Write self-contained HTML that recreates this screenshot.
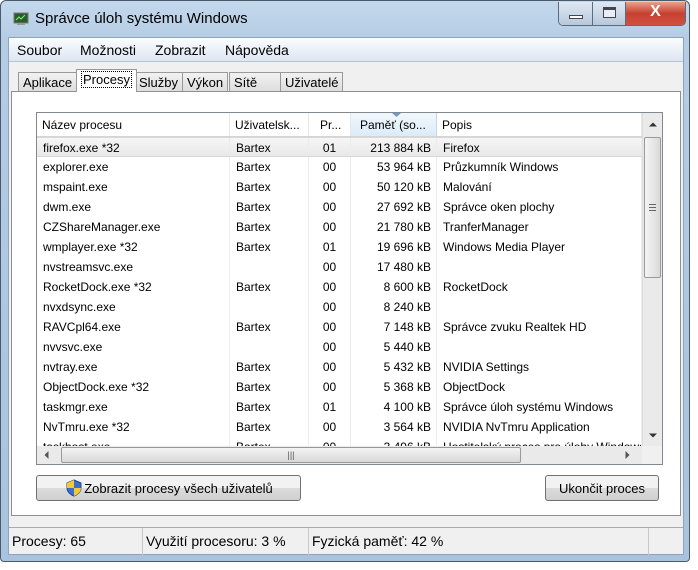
<!DOCTYPE html>
<html><head><meta charset="utf-8"><style>
*{box-sizing:border-box;margin:0;padding:0}
body{width:698px;height:570px;background:#fff;font-family:"Liberation Sans",sans-serif;font-size:12px;color:#000;position:relative;overflow:hidden}
.frame{position:absolute;left:0;top:0;width:690px;height:562px;border:1px solid #4a5a6a;border-radius:6px 6px 4px 4px;background:linear-gradient(#c4d8ec,#b4cce4 40px,#a9c3de);}
.title{position:absolute;left:34px;top:9px;font-size:15px;color:#000}
.client{position:absolute;left:7px;top:36px;width:676px;height:518px;background:#f0f0f0;border:1px solid #8ea4bc}
.menu{position:absolute;left:0;top:0;width:100%;height:24px;background:linear-gradient(#fbfcfe,#dde6f1);border-bottom:1px solid #b6c4d4;font-size:14px}
.menu span{position:absolute;top:4px}
.tab{position:absolute;top:34px;height:20px;border:1px solid #999;border-bottom:none;background:linear-gradient(#f2f2f2,#dcdcdc);font-size:13px;padding:2px 4px 0}
.panel{position:absolute;left:2px;top:53px;width:670px;height:425px;background:#fff;border:1px solid #8e8f8f}
.list{position:absolute;left:24px;top:20px;width:627px;height:353px;border:1px solid #828790;background:#fff;overflow:hidden}
.hdr{position:absolute;left:0;top:0;width:605px;height:24px;background:#fff;border-bottom:1px solid #d5d5d5;font-size:12px}
.hdr div,.row div{position:absolute;top:0;height:100%;white-space:nowrap;overflow:hidden;padding-top:5px}
.hdr div{border-right:1px solid #e3e8ee;padding-left:5px}
.rows{position:absolute;left:0;top:0;width:605px;height:333px;overflow:hidden}
.row{position:absolute;left:0;width:605px;height:20px;font-size:12px}
.row div{padding-top:3px;border-right:1px solid #ececec}
.c1{left:0;width:193px;padding-left:6px}
.c2{left:193px;width:79px;padding-left:6px}
.c3{left:272px;width:42px;text-align:center}
.c4{left:314px;width:86px;text-align:right;padding-right:5px}
.c5{left:400px;width:205px;padding-left:6px}
.vs{position:absolute;left:605px;top:0;width:20px;height:333px;background:#eaeaea;border-left:1px solid #ddd;z-index:3}
.hs{position:absolute;left:0;top:333px;width:625px;height:18px;background:#eaeaea;z-index:3}
.btn{position:absolute;height:26px;border:1px solid #707070;border-radius:3px;background:linear-gradient(#f2f2f2 50%,#dcdcdc 50%,#cfcfcf);font-size:13px;text-align:center;padding-top:5px}
.status{position:absolute;left:0;top:489px;width:674px;height:27px;border-top:1px solid #aaa;font-size:14px;background:#f0f0f0}
.status div{position:absolute;top:0;height:27px;padding:5px 0 0 3px;border-right:1px solid #c8c8c8}
</style></head><body>
<div class="frame">
<svg style="position:absolute;left:12px;top:11px" width="16" height="14"><rect x="1" y="1" width="14" height="10" fill="#2c5a2c" stroke="#777"/><path d="M3 8 L6 5 L8 7 L12 3" stroke="#6f6" fill="none"/><rect x="4" y="11" width="8" height="2" fill="#999"/></svg>
<div class="title">Správce úloh systému Windows</div>
<div style="position:absolute;left:557px;top:1px;width:128px;height:24px;border:1px solid #5a6c80;border-top:none;border-radius:0 0 5px 5px;overflow:hidden;display:flex">
<div style="width:34px;background:linear-gradient(#dfe8f2,#b7c8dc);border-right:1px solid #5a6c80;position:relative"><div style="position:absolute;left:10px;top:13px;width:14px;height:4px;border:1px solid #445;background:#fff"></div></div>
<div style="width:33px;background:linear-gradient(#dfe8f2,#b7c8dc);border-right:1px solid #5a6c80;position:relative"><div style="position:absolute;left:10px;top:5px;width:13px;height:11px;border:1px solid #445;border-top-width:3px;background:#e8eef4"></div></div>
<div style="flex:1;background:linear-gradient(#e8a090,#c74030 50%,#d05040);color:#fff;font-weight:bold;font-size:16px;text-align:center;padding-top:1px">X</div>
</div>
<div class="client">
<div class="menu"><span style="left:8px">Soubor</span><span style="left:71px">Možnosti</span><span style="left:146px">Zobrazit</span><span style="left:216px">Nápověda</span></div>
<div class="tab" style="left:9px;top:34px">Aplikace</div>
<div class="tab" style="left:67px;top:31px;height:23px;background:#fff;z-index:2"><span style="border:1px dotted #000;padding:0 1px">Procesy</span></div>
<div class="tab" style="left:125px">Služby</div>
<div class="tab" style="left:173px">Výkon</div>
<div class="tab" style="left:220px;width:52px">Sítě</div>
<div class="tab" style="left:271px">Uživatelé</div>
<div class="panel">
<div class="list">
<div class="rows" id="rows"></div>
<div class="hdr">
<div style="left:0;width:193px">Název procesu</div>
<div style="left:193px;width:79px">Uživatelsk...</div>
<div style="left:272px;width:42px;padding-left:11px">Pr...</div>
<div style="left:314px;width:86px;background:linear-gradient(#f2f8fc,#dbecf7);border-right:1px solid #c0d8ea;padding-left:9px">Paměť (so...</div>
<div style="left:400px;width:205px">Popis</div>
<svg style="position:absolute;left:355px;top:0" width="9" height="5"><path d="M0 0H9L4.5 4Z" fill="#6c9cc4"/></svg>
</div>
<div class="vs"><svg style="position:absolute;left:6px;top:9px" width="8" height="5"><path d="M0 4.5L4 0.5L8 4.5Z" fill="#333"/></svg>
<div style="position:absolute;left:1px;top:24px;width:17px;height:141px;border:1px solid #999;border-radius:2px;background:linear-gradient(90deg,#f4f4f4,#dadada)"><div style="position:absolute;left:4px;top:66px;width:7px;height:7px;border-top:1px solid #666;border-bottom:1px solid #666"><div style="margin-top:2px;border-top:1px solid #666"></div></div></div>
<svg style="position:absolute;left:6px;top:320px" width="8" height="5"><path d="M0 0.5L4 4.5L8 0.5Z" fill="#333"/></svg></div>
<div class="hs"><svg style="position:absolute;left:7px;top:5px" width="5" height="8"><path d="M4.5 0L0.5 4L4.5 8Z" fill="#555"/></svg>
<div style="position:absolute;left:24px;top:1px;width:460px;height:16px;border:1px solid #999;border-radius:2px;background:linear-gradient(#f4f4f4,#d8d8d8);text-align:center;font-size:9px;color:#555;line-height:14px">|||</div>
<svg style="position:absolute;left:588px;top:5px" width="5" height="8"><path d="M0.5 0L4.5 4L0.5 8Z" fill="#555"/></svg>
<div style="position:absolute;left:605px;top:0;width:20px;height:18px;background:#f0f0f0"></div></div>
</div>
<div class="btn" style="left:24px;top:383px;width:265px"><svg style="position:absolute;left:29px;top:3px" width="16" height="18"><path d="M8 1L15 4V9C15 13 11 16 8 17C5 16 1 13 1 9V4Z" fill="#3a6fd0" stroke="#26488a"/><path d="M8 1V9H1V4ZM8 9H15C15 13 11 16 8 17Z" fill="#f4c830"/></svg><span style="padding-left:20px">Zobrazit procesy všech uživatelů</span></div>
<div class="btn" style="left:533px;top:383px;width:114px">Ukončit proces</div>
</div>
<div class="status"><div style="left:0;width:134px">Procesy: 65</div><div style="left:134px;width:166px">Využití procesoru: 3 %</div><div style="left:300px;width:340px">Fyzická paměť: 42 %</div></div>
</div>
</div>
<script>
var d=[["firefox.exe *32","Bartex","01","213 884 kB","Firefox"],["explorer.exe","Bartex","00","53 964 kB","Průzkumník Windows"],["mspaint.exe","Bartex","00","50 120 kB","Malování"],["dwm.exe","Bartex","00","27 692 kB","Správce oken plochy"],["CZShareManager.exe","Bartex","00","21 780 kB","TranferManager"],["wmplayer.exe *32","Bartex","01","19 696 kB","Windows Media Player"],["nvstreamsvc.exe","","00","17 480 kB",""],["RocketDock.exe *32","Bartex","00","8 600 kB","RocketDock"],["nvxdsync.exe","","00","8 240 kB",""],["RAVCpl64.exe","Bartex","00","7 148 kB","Správce zvuku Realtek HD"],["nvvsvc.exe","","00","5 440 kB",""],["nvtray.exe","Bartex","00","5 432 kB","NVIDIA Settings"],["ObjectDock.exe *32","Bartex","00","5 368 kB","ObjectDock"],["taskmgr.exe","Bartex","01","4 100 kB","Správce úloh systému Windows"],["NvTmru.exe *32","Bartex","00","3 564 kB","NVIDIA NvTmru Application"],["taskhost.exe","Bartex","00","3 496 kB","Hostitelský proces pro úlohy Windows"]];
var h="";d.forEach(function(r,i){h+='<div class="row" style="top:'+(24+i*20)+'px;'+(i==0?'background:linear-gradient(#f6f6f6,#e8e8e8);border-top:1px solid #d8d8d8;border-bottom:1px solid #d8d8d8;':'')+'">';for(var j=0;j<5;j++)h+='<div class="c'+(j+1)+'">'+r[j]+'</div>';h+='</div>';});
document.getElementById("rows").innerHTML=h;
</script>
</body></html>
